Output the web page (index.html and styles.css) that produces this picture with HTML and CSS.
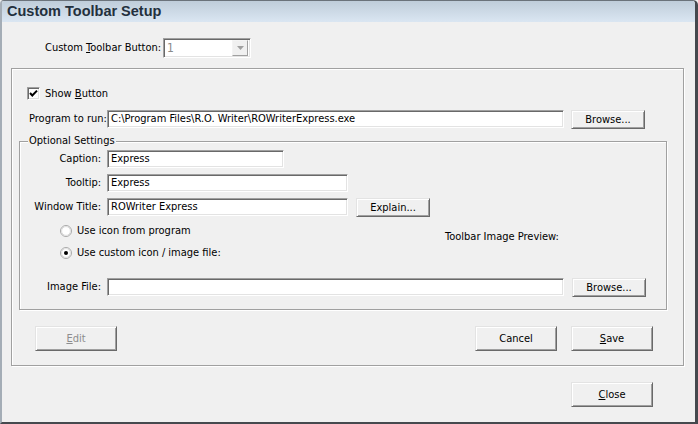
FILE: index.html
```html
<!DOCTYPE html>
<html>
<head>
<meta charset="utf-8">
<title>Custom Toolbar Setup</title>
<link rel="stylesheet" href="styles.css">
</head>
<body>
<div class="window">
  <div class="titlebar">Custom Toolbar Setup</div>
  <div class="client">
    <div class="top-row">
      <span class="top-label">Custom <u>T</u>oolbar Button:</span>
      <div class="combo">
        <span class="combo-text">1</span>
        <span class="combo-btn"><svg width="7" height="4" viewBox="0 0 7 4"><path d="M0 0H7L3.5 4Z" fill="#a0a0a0"/></svg></span>
      </div>
    </div>

    <div class="group">
      <div class="check-row">
        <span class="checkbox"><svg width="11" height="11" viewBox="0 0 11 11"><path d="M2 5L4.3 7.5L9 2.6" fill="none" stroke="#000" stroke-width="2"/></svg></span>
        <span class="check-text">Show <u>B</u>utton</span>
      </div>

      <div class="program-row">
        <span class="lbl-left">Program to run:</span>
        <div class="input w-long">C:\Program Files\R.O. Writer\ROWriterExpress.exe</div>
        <button class="btn btn-sm">Browse...</button>
      </div>

      <div class="optgroup">
        <div class="legend">Optional Settings</div>

        <div class="field-row first">
          <span class="lbl">Caption:</span>
          <div class="input w-short">Express</div>
        </div>
        <div class="field-row">
          <span class="lbl">Tooltip:</span>
          <div class="input w-mid">Express</div>
        </div>
        <div class="field-row">
          <span class="lbl">Window Title:</span>
          <div class="input w-mid">ROWriter Express</div>
          <button class="btn btn-sm">Explain...</button>
        </div>

        <div class="radio-area">
          <div class="radio-col">
            <div class="radio-row">
              <svg class="radio" width="12" height="12" viewBox="0 0 12 12"><circle cx="6" cy="6" r="5.5" fill="#fff" stroke="#a8a8a8"/><circle cx="6" cy="6" r="4.4" fill="none" stroke="#dcdcdc"/></svg>
              <span>Use icon from program</span>
            </div>
            <div class="radio-row">
              <svg class="radio" width="12" height="12" viewBox="0 0 12 12"><circle cx="6" cy="6" r="5.5" fill="#fff" stroke="#a8a8a8"/><circle cx="6" cy="6" r="4.4" fill="none" stroke="#dcdcdc"/><circle cx="6" cy="6" r="2" fill="#000"/></svg>
              <span>Use custom icon / image file:</span>
            </div>
          </div>
          <span class="preview-label">Toolbar Image Preview:</span>
        </div>

        <div class="field-row image-row">
          <span class="lbl">Image File:</span>
          <div class="input w-long"></div>
          <button class="btn btn-sm">Browse...</button>
        </div>
      </div>

      <div class="action-row">
        <button class="btn btn-lg disabled"><u>E</u>dit</button>
        <button class="btn btn-lg cancel">Cancel</button>
        <button class="btn btn-lg save"><u>S</u>ave</button>
      </div>
    </div>

    <div class="close-row">
      <button class="btn btn-lg close"><u>C</u>lose</button>
    </div>
  </div>
</div>
</body>
</html>
```

FILE: styles.css
```css
* { box-sizing: border-box; }

html, body {
  margin: 0;
  padding: 0;
  background: #f0f0f0;
}

body {
  font-family: "DejaVu Sans Condensed", "Liberation Sans", sans-serif;
  font-size: 11px;
  color: #000;
}

u { text-decoration: underline; text-underline-offset: 1px; }

.window {
  width: 698px;
  height: 424px;
  background: #f0f0f0;
  border-top: 1px solid #6b737b;
  border-left: 2px solid #a4adb6;
  border-right: 3px solid #45494e;
  border-bottom: 2px solid #45494e;
  border-top-left-radius: 4px;
  border-top-right-radius: 5px;
  display: flex;
  flex-direction: column;
  overflow: hidden;
}

.titlebar {
  height: 21px;
  flex: none;
  background: linear-gradient(#bfcdda, #dae6f2);
  font-family: "Liberation Sans", Arial, sans-serif;
  font-weight: bold;
  font-size: 14.5px;
  line-height: 21px;
  color: #23303d;
  padding-left: 5px;
}

.client {
  flex: 1;
  display: flex;
  flex-direction: column;
}

/* top row */
.top-row {
  display: flex;
  align-items: center;
  margin-top: 16px;
  padding-left: 43px;
  height: 20px;
}

.top-label {
  width: 118px;
  line-height: 14px;
  white-space: nowrap;
}

.combo {
  width: 88px;
  height: 20px;
  background: #fff;
  border: 1px solid;
  border-color: #a0a0a0 #fff #fff #a0a0a0;
  box-shadow: inset 1px 1px 0 #696969, inset -1px -1px 0 #e3e3e3;
  display: flex;
  align-items: center;
  padding: 2px 2px 2px 3px;
}

.combo-text {
  flex: 1;
  color: #8a8a8a;
  line-height: 14px;
  font-size: 12px;
}

.combo-btn {
  width: 16px;
  height: 16px;
  background: #f0f0f0;
  border: 1px solid;
  border-color: #f4f4f4 #a0a0a0 #a0a0a0 #f4f4f4;
  display: flex;
  align-items: center;
  justify-content: center;
}

/* groups */
.group {
  margin-top: 10px;
  margin-left: 9px;
  width: 673px;
  border: 1px solid #a0a0a0;
  box-shadow: 1px 1px 0 #fff, inset 1px 1px 0 #fff;
  padding: 0 0 14px 7px;
}

.check-row {
  display: flex;
  align-items: center;
  margin-top: 18px;
  margin-left: 8px;
  height: 13px;
}

.checkbox {
  width: 13px;
  height: 13px;
  background: #fff;
  border: 1px solid;
  border-color: #a0a0a0 #fff #fff #a0a0a0;
  box-shadow: inset 1px 1px 0 #696969, inset -1px -1px 0 #e3e3e3;
  display: flex;
  align-items: center;
  justify-content: center;
}

.check-text {
  margin-left: 5px;
  line-height: 13px;
}

.program-row {
  display: flex;
  align-items: flex-start;
  margin-top: 10px;
  height: 19px;
}

.lbl-left {
  margin-left: 10px;
  width: 78px;
  line-height: 18px;
  white-space: nowrap;
}

.input {
  height: 18px;
  background: #fff;
  border: 1px solid;
  border-color: #a0a0a0 #fff #fff #a0a0a0;
  box-shadow: inset 1px 1px 0 #696969, inset -1px -1px 0 #e3e3e3;
  padding-left: 3px;
  line-height: 16px;
  white-space: nowrap;
  overflow: hidden;
}

.w-long { width: 457px; }
.w-mid { width: 241px; }
.w-short { width: 177px; }

.btn {
  font: inherit;
  color: #000;
  background: #f0f0f0;
  border: 1px solid;
  border-color: #e3e3e3 #696969 #696969 #e3e3e3;
  box-shadow: inset 1px 1px 0 #fff, inset -1px -1px 0 #a0a0a0;
  padding: 0;
  margin: 0;
  display: flex;
  align-items: center;
  justify-content: center;
  line-height: 14px;
}

.btn-sm {
  width: 74px;
  height: 19px;
  margin-left: 7px;
}

.btn-lg {
  width: 82px;
  height: 25px;
}

.btn.disabled { color: #8d8d8d; }

.optgroup {
  margin-top: 12px;
  width: 648px;
  border: 1px solid #a0a0a0;
  box-shadow: 1px 1px 0 #fff, inset 1px 1px 0 #fff;
  padding-bottom: 12px;
}

.legend {
  width: max-content;
  margin-top: -8px;
  margin-left: 8px;
  padding: 0 1px;
  line-height: 14px;
  background: #f0f0f0;
}

.field-row {
  display: flex;
  align-items: flex-start;
  margin-top: 6px;
}

.field-row.first { margin-top: 2px; }

.field-row .btn-sm { margin-left: 8px; }

.lbl {
  width: 87px;
  text-align: right;
  padding-right: 6px;
  line-height: 18px;
  white-space: nowrap;
}

.radio-area {
  display: flex;
  margin-top: 7px;
}

.radio-col {
  width: 425px;
  padding-left: 40px;
  display: flex;
  flex-direction: column;
  gap: 8px;
}

.radio-row {
  display: flex;
  align-items: center;
  height: 14px;
  line-height: 14px;
}

.radio { margin-right: 5px; flex: none; }

.preview-label {
  margin-top: 6px;
  line-height: 14px;
}

.image-row { margin-top: 18px; }

.action-row {
  display: flex;
  margin-top: 16px;
  padding-left: 16px;
}

.action-row .cancel { margin-left: 358px; }
.action-row .save { margin-left: 14px; }

.close-row {
  margin-top: 16px;
  padding-left: 569px;
}
```
